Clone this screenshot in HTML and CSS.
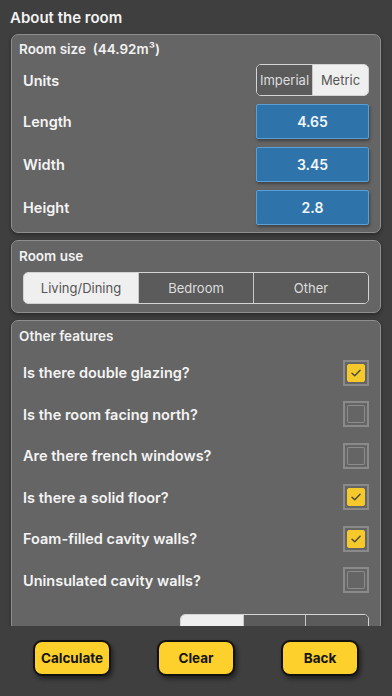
FILE: index.html
```html
<!DOCTYPE html>
<html>
<head>
<meta charset="utf-8">
<link rel="stylesheet" href="styles.css">
</head>
<body>
<div class="screen">
  <div class="scroll">
    <div class="title">About the room</div>

    <section class="card card-size">
      <div class="card-head">Room size&nbsp; (44.92m³)</div>
      <div class="row">
        <span class="label">Units</span>
        <div class="seg seg-units">
          <span class="seg-item">Imperial</span>
          <span class="seg-item on">Metric</span>
        </div>
      </div>
      <div class="row">
        <span class="label">Length</span>
        <div class="num">4.65</div>
      </div>
      <div class="row">
        <span class="label">Width</span>
        <div class="num">3.45</div>
      </div>
      <div class="row">
        <span class="label">Height</span>
        <div class="num">2.8</div>
      </div>
    </section>

    <section class="card card-use">
      <div class="card-head">Room use</div>
      <div class="seg seg-use">
        <span class="seg-item on">Living/Dining</span>
        <span class="seg-item">Bedroom</span>
        <span class="seg-item">Other</span>
      </div>
    </section>

    <section class="card card-features">
      <div class="card-head">Other features</div>
      <div class="check-row">
        <span class="label">Is there double glazing?</span>
        <span class="box checked"><span class="inner"><svg viewBox="0 0 18 18" width="16" height="16"><path d="M4.5 9.2 L7.6 12.2 L13.6 6" fill="none" stroke="#4a4a3a" stroke-width="1.6" stroke-linecap="round" stroke-linejoin="round"/></svg></span></span>
      </div>
      <div class="check-row">
        <span class="label">Is the room facing north?</span>
        <span class="box"><span class="inner"></span></span>
      </div>
      <div class="check-row">
        <span class="label">Are there french windows?</span>
        <span class="box"><span class="inner"></span></span>
      </div>
      <div class="check-row">
        <span class="label">Is there a solid floor?</span>
        <span class="box checked"><span class="inner"><svg viewBox="0 0 18 18" width="16" height="16"><path d="M4.5 9.2 L7.6 12.2 L13.6 6" fill="none" stroke="#4a4a3a" stroke-width="1.6" stroke-linecap="round" stroke-linejoin="round"/></svg></span></span>
      </div>
      <div class="check-row">
        <span class="label">Foam-filled cavity walls?</span>
        <span class="box checked"><span class="inner"><svg viewBox="0 0 18 18" width="16" height="16"><path d="M4.5 9.2 L7.6 12.2 L13.6 6" fill="none" stroke="#4a4a3a" stroke-width="1.6" stroke-linecap="round" stroke-linejoin="round"/></svg></span></span>
      </div>
      <div class="check-row">
        <span class="label">Uninsulated cavity walls?</span>
        <span class="box"><span class="inner"></span></span>
      </div>
      <div class="row row-walls">
        <div class="seg seg-walls">
          <span class="seg-item on"></span>
          <span class="seg-item"></span>
          <span class="seg-item"></span>
        </div>
      </div>
    </section>
  </div>

  <div class="bar">
    <button class="btn">Calculate</button>
    <button class="btn">Clear</button>
    <button class="btn">Back</button>
  </div>
</div>
</body>
</html>
```

FILE: styles.css
```css
* { box-sizing: border-box; }
html, body {
  margin: 0;
  padding: 0;
  background: #3f3f3f;
}
body {
  font-family: Inter, "Liberation Sans", Arial, sans-serif;
  color: #f2f2f2;
}
.screen {
  width: 392px;
  height: 696px;
  display: flex;
  flex-direction: column;
}
.scroll {
  height: 626px;
  overflow: hidden;
  flex: none;
}
.title {
  font-size: 15px;
  font-weight: 600;
  padding: 9px 0 0 10px;
  height: 34px;
  line-height: 18px;
}
.card {
  margin: 0 11px 0 11px;
  background: #656565;
  border: 1.5px solid #8e8e8e;
  border-radius: 7px;
  box-shadow: 0 2px 4px rgba(0,0,0,0.35);
}
.card + .card { margin-top: 7px; }
.card-head {
  font-size: 13.5px;
  font-weight: 600;
  padding: 0 0 0 7px;
  height: 29px;
  line-height: 29px;
}
.card-size { padding-bottom: 7px; }
.card-size .row + .row { margin-top: 8px; }
.row {
  display: flex;
  align-items: center;
  justify-content: space-between;
  padding: 0 11px 0 11px;
}
.label {
  font-size: 14.5px;
  font-weight: 600;
  color: #f4f4f4;
}
.seg {
  display: flex;
  border: 1px solid #d4d4d4;
  border-radius: 5px;
  overflow: hidden;
  height: 32px;
}
.seg-item {
  display: flex;
  align-items: center;
  justify-content: center;
  font-size: 13px;
  font-weight: 400;
  color: #dedede;
  background: #5b5b5b;
}
.seg-item + .seg-item { border-left: 1px solid #c8c8c8; }
.seg-item.on {
  background: #efefef;
  color: #555;
}
.seg-units { width: 113px; }
.seg-units .seg-item { flex: 1; }
.seg-units .seg-item:first-child { flex: 0 0 55px; }
.num {
  width: 113px;
  height: 35px;
  background: #2e74ab;
  border: 1.5px solid #5a9fd6;
  border-radius: 2px;
  display: flex;
  align-items: center;
  justify-content: center;
  font-size: 14px;
  font-weight: 600;
  color: #f4f6f8;
  box-shadow: 1px 2px 3px rgba(0,0,0,0.35);
}
.card-use { padding-bottom: 8px; }
.card-use .card-head { height: 29px; line-height: 31px; }
.seg-use {
  margin: 2px 11px 0 11px;
}
.seg-use .seg-item { flex: 1; }
.card-features .card-head { height: 31px; line-height: 30px; }
.check-row {
  display: flex;
  align-items: center;
  justify-content: space-between;
  padding: 0 11px;
  height: 41.5px;
}
.box {
  width: 26px;
  height: 26px;
  border: 2px solid #8a8a8a;
  display: flex;
  align-items: center;
  justify-content: center;
}
.box .inner {
  width: 18px;
  height: 18px;
  border: 1.5px solid #8c8c8c;
  border-radius: 2px;
  display: flex;
  align-items: center;
  justify-content: center;
}
.box.checked .inner {
  background: #f5c82c;
  border-color: #f5c82c;
}
.row-walls {
  margin-top: 13px;
  justify-content: flex-end;
}
.seg-walls { width: 189px; }
.seg-walls .seg-item { flex: 1; }
.bar {
  flex: 1;
  display: flex;
  justify-content: space-between;
  align-items: flex-start;
  padding: 14px 33px 0 33px;
}
.btn {
  width: 78px;
  height: 36px;
  background: #fdd02b;
  border: 2px solid #111;
  border-radius: 9px;
  font-family: Inter, "Liberation Sans", Arial, sans-serif;
  font-size: 13.5px;
  font-weight: 700;
  color: #151515;
  box-shadow: 2px 3px 4px rgba(0,0,0,0.45);
  padding: 0;
}
```
